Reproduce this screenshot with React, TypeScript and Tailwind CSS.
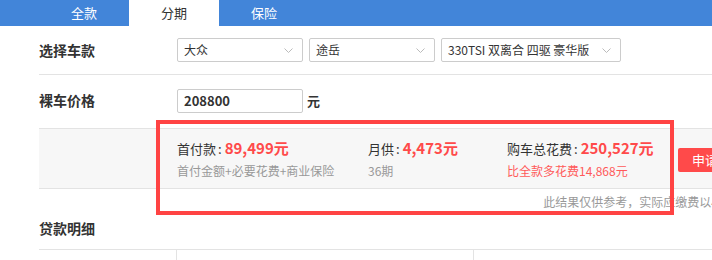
import React from "react";

const font = { fontFamily: '"Noto Sans CJK SC", "Noto Sans", sans-serif' };

function Chevron() {
  return (
    <svg width="9" height="5" viewBox="0 0 9 5" className="shrink-0">
      <path d="M0.5 0.5 L4.5 4.5 L8.5 0.5" fill="none" stroke="#bbbbbb" strokeWidth="1" />
    </svg>
  );
}

function Select({ label, w }: { label: string; w: string }) {
  return (
    <div className={`${w} h-[24px] border border-[#cccccc] rounded-[2px] flex items-center justify-between pl-[6px] pr-[9px] text-[12px] text-[#333]`}>
      <span className="whitespace-nowrap">{label}</span>
      <Chevron />
    </div>
  );
}

function Stat({ label, value }: { label: string; value: string }) {
  return (
    <div className="flex items-baseline h-[21px]">
      <span className="text-[13px] text-[#333] pr-[3px]">
        {label}
        <span className="ml-[2px]">:</span>
      </span>
      <span className="text-[15px] font-bold text-[#ff4a4a]">{value}</span>
    </div>
  );
}

export default function App() {
  return (
    <div className="w-[712px] h-[260px] overflow-hidden bg-white relative" style={font}>
      <div className="h-[26px] bg-[#4285d9] flex pl-[39px]">
        <div className="w-[90px] flex items-center justify-center text-[13px] text-white">全款</div>
        <div className="w-[90px] flex items-center justify-center text-[13px] text-[#333] bg-white">分期</div>
        <div className="w-[90px] flex items-center justify-center text-[13px] text-white">保险</div>
      </div>
      <div className="pl-[39px] w-[761px]">
        <div className="h-[49px] border-b border-[#e3e3e3] flex items-center">
          <div className="w-[138px] text-[14px] font-bold text-[#333]">选择车款</div>
          <div className="flex gap-[6px]">
            <Select label="大众" w="w-[126px]" />
            <Select label="途岳" w="w-[126px]" />
            <Select label="330TSI 双离合 四驱 豪华版" w="w-[180px]" />
          </div>
        </div>
        <div className="h-[54px] border-b border-[#e3e3e3] flex items-center pb-[2px]">
          <div className="w-[138px] text-[14px] font-bold text-[#333]">裸车价格</div>
          <div className="w-[126px] h-[24px] border border-[#cccccc] rounded-[2px] flex items-center pl-[6px] text-[13px] font-bold text-[#333]">208800</div>
          <span className="ml-[4px] text-[13px] font-bold text-[#333]">元</span>
        </div>
        <div className="h-[60px] border-b border-[#e3e3e3] bg-[#f7f7f7] flex pl-[138px] pt-[8px]">
          <div className="w-[191px] flex flex-col">
            <Stat label="首付款" value="89,499元" />
            <div className="text-[12px] text-[#999] mt-[4px]">首付金额+必要花费+商业保险</div>
          </div>
          <div className="w-[139px] flex flex-col">
            <Stat label="月供" value="4,473元" />
            <div className="text-[12px] text-[#999] mt-[4px]">36期</div>
          </div>
          <div className="w-[171px] flex flex-col">
            <Stat label="购车总花费" value="250,527元" />
            <div className="text-[12px] text-[#ff5a5a] mt-[4px]">比全款多花费14,868元</div>
          </div>
          <div className="pt-[11px]">
            <div className="w-[80px] h-[24px] bg-[#ff4a4a] rounded-[2px] flex items-center justify-center text-[13px] text-white">申请贷款</div>
          </div>
        </div>
        <div className="h-[26px] flex items-center justify-end text-[12px] text-[#999] whitespace-nowrap">
          此结果仅供参考，实际应缴费以4S店为准
        </div>
        <div className="h-[34px] flex items-center pb-[7px] text-[14px] font-bold text-[#333]">贷款明细</div>
        <div className="border-t border-[#e3e3e3] flex h-[20px]">
          <div className="w-[137px]"></div>
          <div className="w-[297px] border-l border-[#e3e3e3]"></div>
          <div className="flex-1 border-l border-[#e3e3e3]"></div>
        </div>
      </div>
      <div className="absolute left-[156px] top-[120px] w-[518px] h-[95px] border-[4px] border-[#ff4343]"></div>
    </div>
  );
}
